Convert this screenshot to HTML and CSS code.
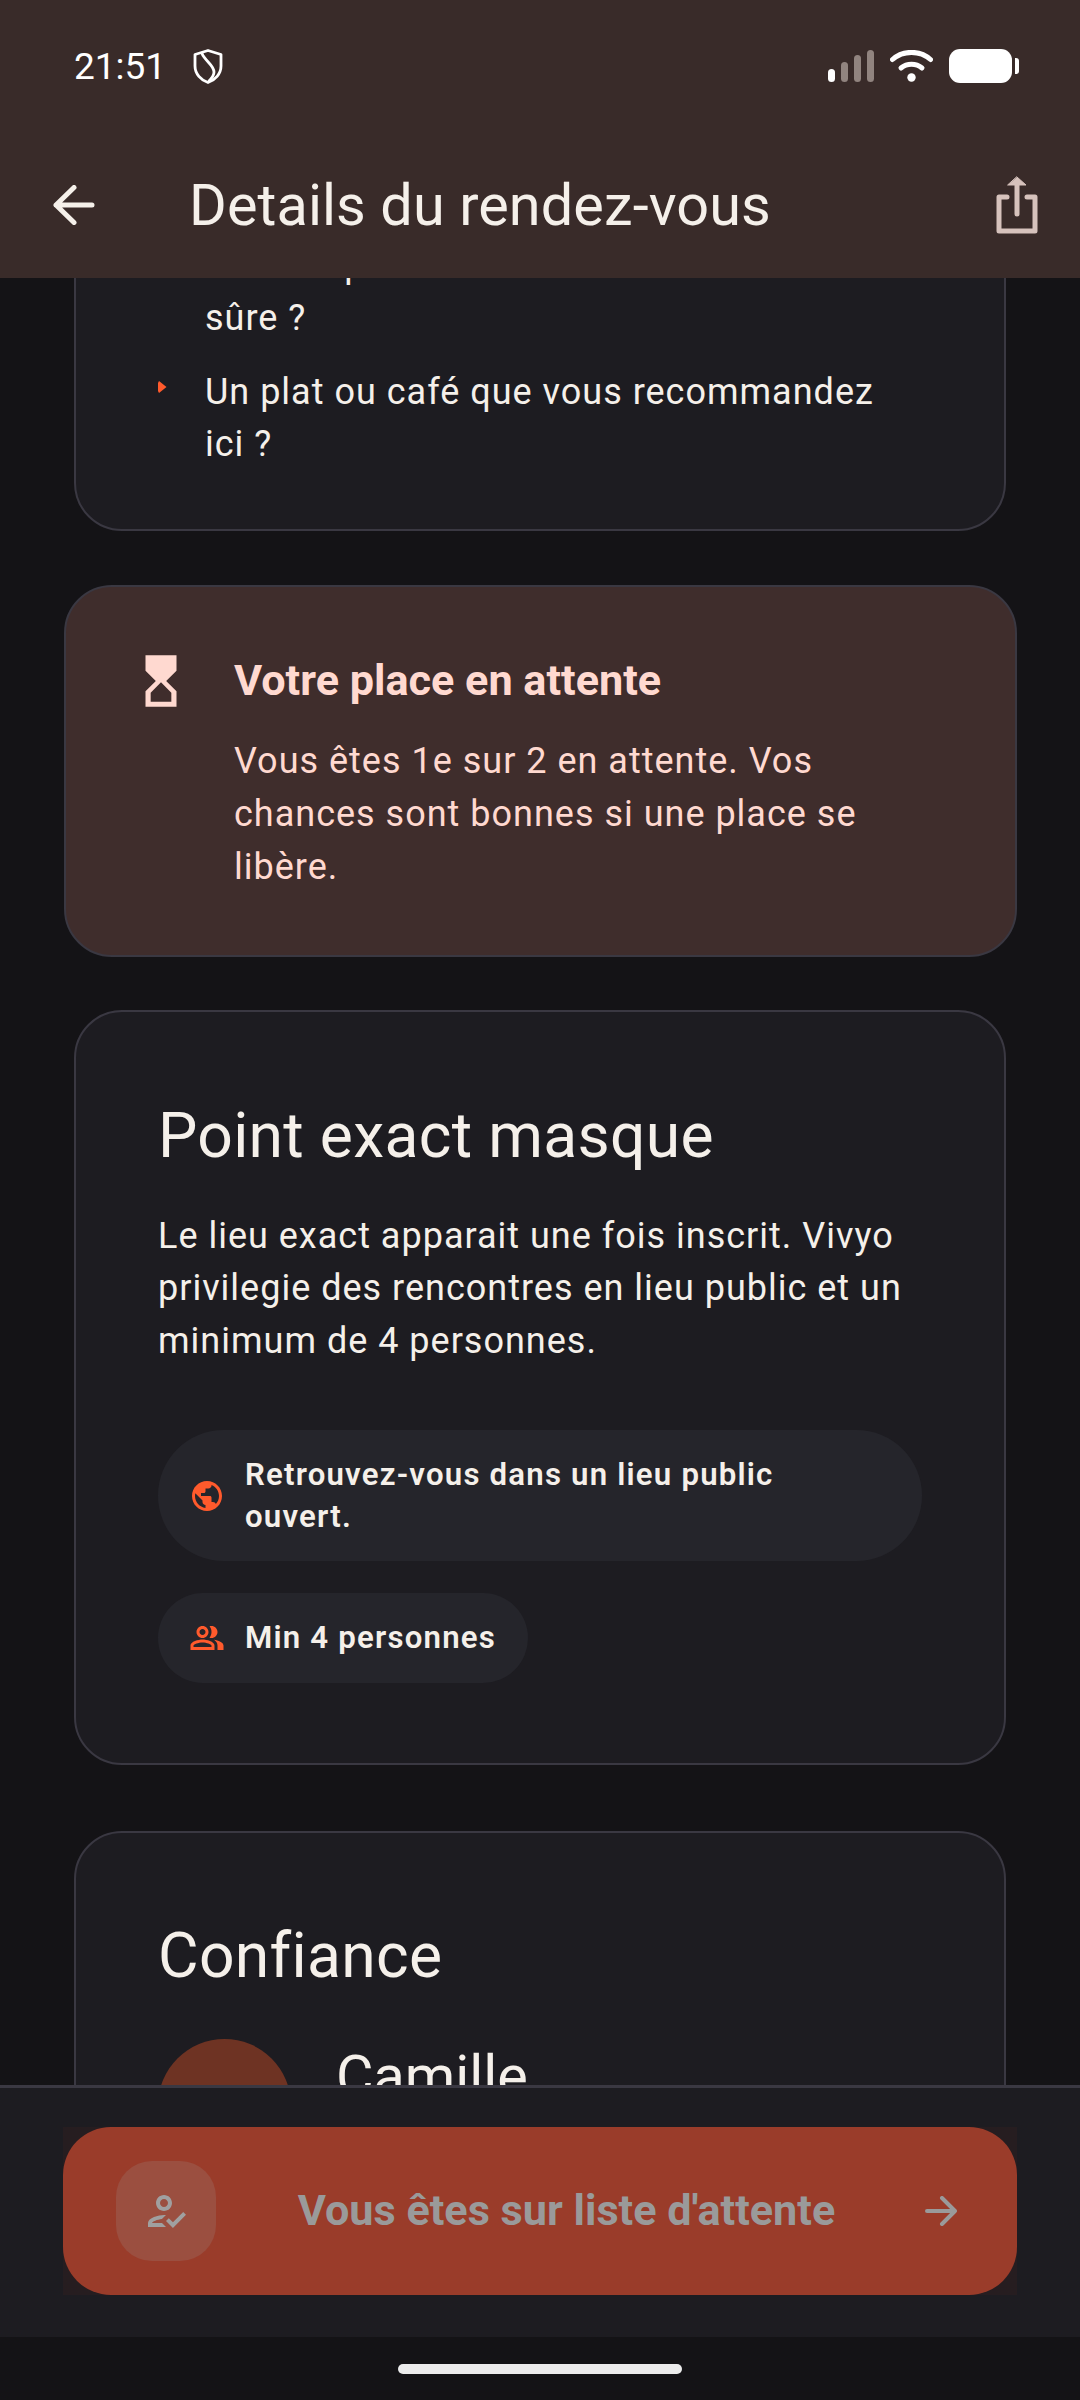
FILE: index.html
```html
<!DOCTYPE html>
<html lang="fr">
<head>
    <meta charset="UTF-8">
    <meta name="viewport" content="width=device-width, initial-scale=1.0">
    <title>Details du rendez-vous</title>
    <link rel="stylesheet" href="styles.css">
</head>
<body>
    <div class="screen">
        <header class="top">
            <div class="status">
                <div class="status-left">
                    <span class="time">21:51</span>
                    <svg class="shield" viewBox="0 0 30 35" fill="none" stroke="#fff" stroke-width="2.8" stroke-linejoin="round" stroke-linecap="round">
                        <path d="M15 1.5 28 5.5V17C28 25 22 31 15 33.5 8 31 2 25 2 17V5.5Z"/>
                        <path d="M9 4.5C12 12 21 16 21 23 21 26 19 29 16 32"/>
                    </svg>
                </div>
                <div class="status-right">
                    <div class="signal">
                        <span class="bar bar1"></span>
                        <span class="bar bar2"></span>
                        <span class="bar bar3"></span>
                        <span class="bar bar4"></span>
                    </div>
                    <svg class="wifi" viewBox="0 0 43 32" fill="none" stroke="#fff" stroke-linecap="round">
                        <path d="M2.5 9.5C13 0 30 0 40.5 9.5" stroke-width="5"/>
                        <path d="M11 18C17 13 26 13 32 18" stroke-width="5"/>
                        <circle cx="21.5" cy="27.5" r="4.2" fill="#fff" stroke="none"/>
                    </svg>
                    <div class="battery"><span class="battery-tip"></span></div>
                </div>
            </div>
            <div class="toolbar">
                <svg class="back" viewBox="0 0 42 40" fill="none" stroke="#f5f0ea" stroke-width="5" stroke-linecap="round" stroke-linejoin="round">
                    <path d="M39 20H3M21 2.5 3 20 21 37.5"/>
                </svg>
                <h1 class="title">Details du rendez-vous</h1>
                <svg class="share" viewBox="0 0 42 58" fill="none" stroke="#d6c2bc" stroke-width="5" stroke-linecap="round" stroke-linejoin="round">
                    <path d="M11 21H3V55H39V21H31"/>
                    <path d="M21 38V6"/>
                    <path d="M21 1 30 9H12Z" fill="#d6c2bc" stroke-width="1"/>
                </svg>
            </div>
        </header>

        <main class="content">
            <div class="scroll">
                <section class="card card-list">
                    <ul class="bullets">
                        <li>
                            <svg class="marker" viewBox="0 0 9 14"><path d="M1 1 8.5 7 1 13 0 11V3Z"/></svg>
                            <span>Une rue peu connue et bien<br>sûre ?</span>
                        </li>
                        <li>
                            <svg class="marker" viewBox="0 0 9 14"><path d="M1 1 8.5 7 1 13 0 11V3Z"/></svg>
                            <span>Un plat ou café que vous recommandez ici ?</span>
                        </li>
                    </ul>
                </section>

                <section class="wait">
                    <svg class="wait-icon" viewBox="0 0 24 24"><path d="M6 2v6h.01L6 8.01 10 12l-4 4 .01.01H6V22h12v-5.99h-.01L18 16l-4-4 4-3.99-.01-.01H18V2H6zm10 14.5V20H8v-3.5l4-4 4 4z"/></svg>
                    <div class="wait-text">
                        <h3>Votre place en attente</h3>
                        <p>Vous êtes 1e sur 2 en attente. Vos chances sont bonnes si une place se libère.</p>
                    </div>
                </section>

                <section class="card card-point">
                    <h2>Point exact masque</h2>
                    <p class="body-text">Le lieu exact apparait une fois inscrit. Vivyo privilegie des rencontres en lieu public et un minimum de 4 personnes.</p>
                    <div class="chips">
                        <div class="chip chip-wide">
                            <svg viewBox="0 0 24 24"><path d="M12 2C6.48 2 2 6.48 2 12s4.48 10 10 10 10-4.48 10-10S17.52 2 12 2zm-1 17.93c-3.95-.49-7-3.85-7-7.93 0-.62.08-1.21.21-1.79L9 15v1c0 1.1.9 2 2 2v1.93zm6.9-2.54c-.26-.81-1-1.39-1.9-1.39h-1v-3c0-.55-.45-1-1-1H8v-2h2c.55 0 1-.45 1-1V7h2c1.1 0 2-.9 2-2v-.41c2.93 1.19 5 4.06 5 7.41 0 2.08-.8 3.97-2.1 5.39z"/></svg>
                            <span>Retrouvez-vous dans un lieu public ouvert.</span>
                        </div>
                        <div class="chip">
                            <svg viewBox="0 0 24 24"><path d="M16.67 13.13C18.04 14.06 19 15.32 19 17v3h4v-3c0-2.18-3.57-3.47-6.33-3.87zM15 12c2.21 0 4-1.79 4-4s-1.79-4-4-4c-.47 0-.91.1-1.33.24C14.5 5.27 15 6.58 15 8s-.5 2.73-1.33 3.76c.42.14.86.24 1.33.24zM9 12c2.21 0 4-1.79 4-4s-1.79-4-4-4-4 1.79-4 4 1.79 4 4 4zm0-6c1.1 0 2 .9 2 2s-.9 2-2 2-2-.9-2-2 .9-2 2-2zM9 13c-2.67 0-8 1.34-8 4v3h16v-3c0-2.66-5.33-4-8-4zm6 5H3v-.99C3.2 16.29 6.3 15 9 15s5.8 1.29 6 2z"/></svg>
                            <span>Min 4 personnes</span>
                        </div>
                    </div>
                </section>

                <section class="card card-trust">
                    <h2>Confiance</h2>
                    <div class="host">
                        <div class="avatar"></div>
                        <div class="host-name">Camille</div>
                    </div>
                </section>
            </div>
        </main>

        <footer class="bottom">
            <div class="action-wrap">
                <div class="action">
                    <div class="action-icon">
                        <svg viewBox="0 0 24 24"><path d="M11 12c2.21 0 4-1.79 4-4s-1.79-4-4-4-4 1.79-4 4 1.79 4 4 4zm0-6c1.1 0 2 .9 2 2s-.9 2-2 2-2-.9-2-2 .9-2 2-2zM5 18c.2-.63 2.57-1.68 4.96-1.94l2.04-2c-.39-.04-.68-.06-1-.06-2.67 0-8 1.34-8 4v2h9l-2-2H5zm15.6-5.5l-5.13 5.17-2.07-2.08L12 17l3.47 3.5L22 13.91z"/></svg>
                    </div>
                    <span class="action-label">Vous êtes sur liste d'attente</span>
                    <svg class="action-arrow" viewBox="0 0 32 30" fill="none" stroke="#9a9a9a" stroke-width="4" stroke-linecap="round" stroke-linejoin="round">
                        <path d="M2 15H30M17 2 30 15 17 28"/>
                    </svg>
                </div>
            </div>
        </footer>

        <div class="home-area"><span class="home-bar"></span></div>
    </div>
</body>
</html>
```

FILE: styles.css
```css
* {
    box-sizing: border-box;
}
body {
    margin: 0;
    padding: 0;
    background-color: #141316;
    font-family: Roboto, "Noto Sans", sans-serif;
    color: #f5f0ea;
}
h1, h2, h3, p, ul {
    margin: 0;
    padding: 0;
}
.screen {
    width: 1080px;
    height: 2400px;
    display: flex;
    flex-direction: column;
    overflow: hidden;
}

/* top bar */
.top {
    height: 278px;
    background-color: #392b29;
    flex-shrink: 0;
}
.status {
    height: 132px;
    display: flex;
    align-items: center;
    justify-content: space-between;
    padding: 0 68px 0 74px;
}
.status-left {
    display: flex;
    align-items: center;
    gap: 27px;
}
.time {
    font-size: 37px;
    color: #fff;
}
.shield {
    width: 30px;
    height: 35px;
}
.status-right {
    display: flex;
    align-items: center;
}
.signal {
    display: flex;
    align-items: flex-end;
    gap: 6px;
    height: 32px;
    margin-right: 16px;
}
.bar {
    width: 7px;
    border-radius: 4px;
    background-color: #91847f;
}
.bar1 {
    height: 13px;
    background-color: #fff;
}
.bar2 {
    height: 20px;
}
.bar3 {
    height: 27px;
}
.bar4 {
    height: 32px;
}
.wifi {
    width: 43px;
    height: 32px;
    margin-right: 16px;
}
.battery {
    position: relative;
    width: 63px;
    height: 34px;
    border-radius: 11px;
    background-color: #fff;
}
.battery-tip {
    position: absolute;
    left: 66px;
    top: 9px;
    width: 4px;
    height: 16px;
    border-radius: 0 3px 3px 0;
    background-color: #fff;
}
.toolbar {
    height: 146px;
    display: flex;
    align-items: center;
    padding: 0 42px 0 53px;
}
.back {
    width: 42px;
    height: 40px;
    flex-shrink: 0;
}
.title {
    flex: 1;
    margin-left: 94px;
    font-size: 57.6px;
    font-weight: 400;
    letter-spacing: 0.1px;
    color: #f5f0ea;
}
.share {
    width: 42px;
    height: 58px;
    flex-shrink: 0;
}

/* scrolled content */
.content {
    flex: 1;
    overflow: hidden;
}
.scroll {
    margin-top: -79px;
    display: flex;
    flex-direction: column;
}
.card {
    margin: 0 74px;
    background-color: #1d1c21;
    border: 2px solid #3a3842;
    border-radius: 48px;
}
.card-list {
    padding: 38px 82px 58px;
}
.bullets {
    list-style: none;
    display: flex;
    flex-direction: column;
    gap: 21px;
}
.bullets li {
    display: flex;
    font-size: 36px;
    line-height: 52.8px;
    letter-spacing: 1px;
}
.marker {
    width: 9px;
    height: 14px;
    margin: 14px 38px 0 0;
    flex-shrink: 0;
    fill: #ff5a2c;
}
.bullets span {
    padding-right: 30px;
}
.wait {
    margin: 54px 63px 53px 64px;
    padding: 68px 80px 61px 65px;
    display: flex;
    gap: 42px;
    background-color: #3f2d2c;
    border: 2px solid #3a3842;
    border-radius: 48px;
    color: #ffd9d0;
}
.wait-icon {
    width: 62px;
    height: 62px;
    margin: -5px 0 0 -1px;
    flex-shrink: 0;
    fill: #ffd9d0;
}
.wait-text h3 {
    font-size: 43.2px;
    line-height: 52px;
    font-weight: 700;
    margin-bottom: 28px;
}
.wait-text p {
    font-size: 36px;
    line-height: 52.8px;
    letter-spacing: 1px;
}
.card h2 {
    font-size: 62.4px;
    line-height: 76px;
    font-weight: 400;
    letter-spacing: 0.3px;
}
.card-point {
    padding: 86px 82px 80px;
    margin-bottom: 66px;
}
.body-text {
    margin-top: 36px;
    font-size: 36px;
    line-height: 52.8px;
    letter-spacing: 1px;
}
.chips {
    margin-top: 62px;
    display: flex;
    flex-direction: column;
    align-items: flex-start;
    gap: 32px;
}
.chip {
    display: flex;
    align-items: center;
    gap: 20px;
    min-height: 89px;
    padding: 24px 32px 24px 31px;
    border-radius: 999px;
    background-color: #25252b;
    font-size: 31.2px;
    line-height: 41.6px;
    font-weight: 600;
    letter-spacing: 1.2px;
}
.chip-wide {
    width: 100%;
    padding-right: 80px;
}
.chip svg {
    width: 36px;
    height: 36px;
    flex-shrink: 0;
    fill: #ff5a2c;
}
.card-trust {
    padding: 85px 82px 0;
    height: 600px;
}
.host {
    margin-top: 45px;
    display: flex;
    gap: 45px;
}
.avatar {
    width: 133px;
    height: 133px;
    border-radius: 50%;
    background-color: #6e3323;
    flex-shrink: 0;
}
.host-name {
    font-size: 57.6px;
    line-height: 76px;
}

/* bottom action */
.bottom {
    height: 252px;
    flex-shrink: 0;
    padding: 39px 63px 0;
    background-color: #1d1c21;
    border-top: 3px solid #3a3842;
}
.action-wrap {
    background-color: #261d20;
}
.action {
    height: 168px;
    display: flex;
    align-items: center;
    padding: 0 60px 0 53px;
    border-radius: 48px;
    background-color: #9a3c2a;
}
.action-icon {
    width: 100px;
    height: 100px;
    flex-shrink: 0;
    display: flex;
    align-items: center;
    justify-content: center;
    border-radius: 36px;
    background-color: #9b4f40;
}
.action-icon svg {
    width: 48px;
    height: 48px;
    fill: #a0a0a0;
}
.action-label {
    flex: 1;
    padding: 0 8px 2px 0;
    text-align: center;
    font-size: 43.2px;
    font-weight: 700;
    color: #9a9a9a;
}
.action-arrow {
    width: 32px;
    height: 30px;
    flex-shrink: 0;
}
.home-area {
    height: 63px;
    flex-shrink: 0;
    display: flex;
    justify-content: center;
    padding-top: 27px;
}
.home-bar {
    width: 284px;
    height: 10px;
    border-radius: 5px;
    background-color: #ececec;
}
```
